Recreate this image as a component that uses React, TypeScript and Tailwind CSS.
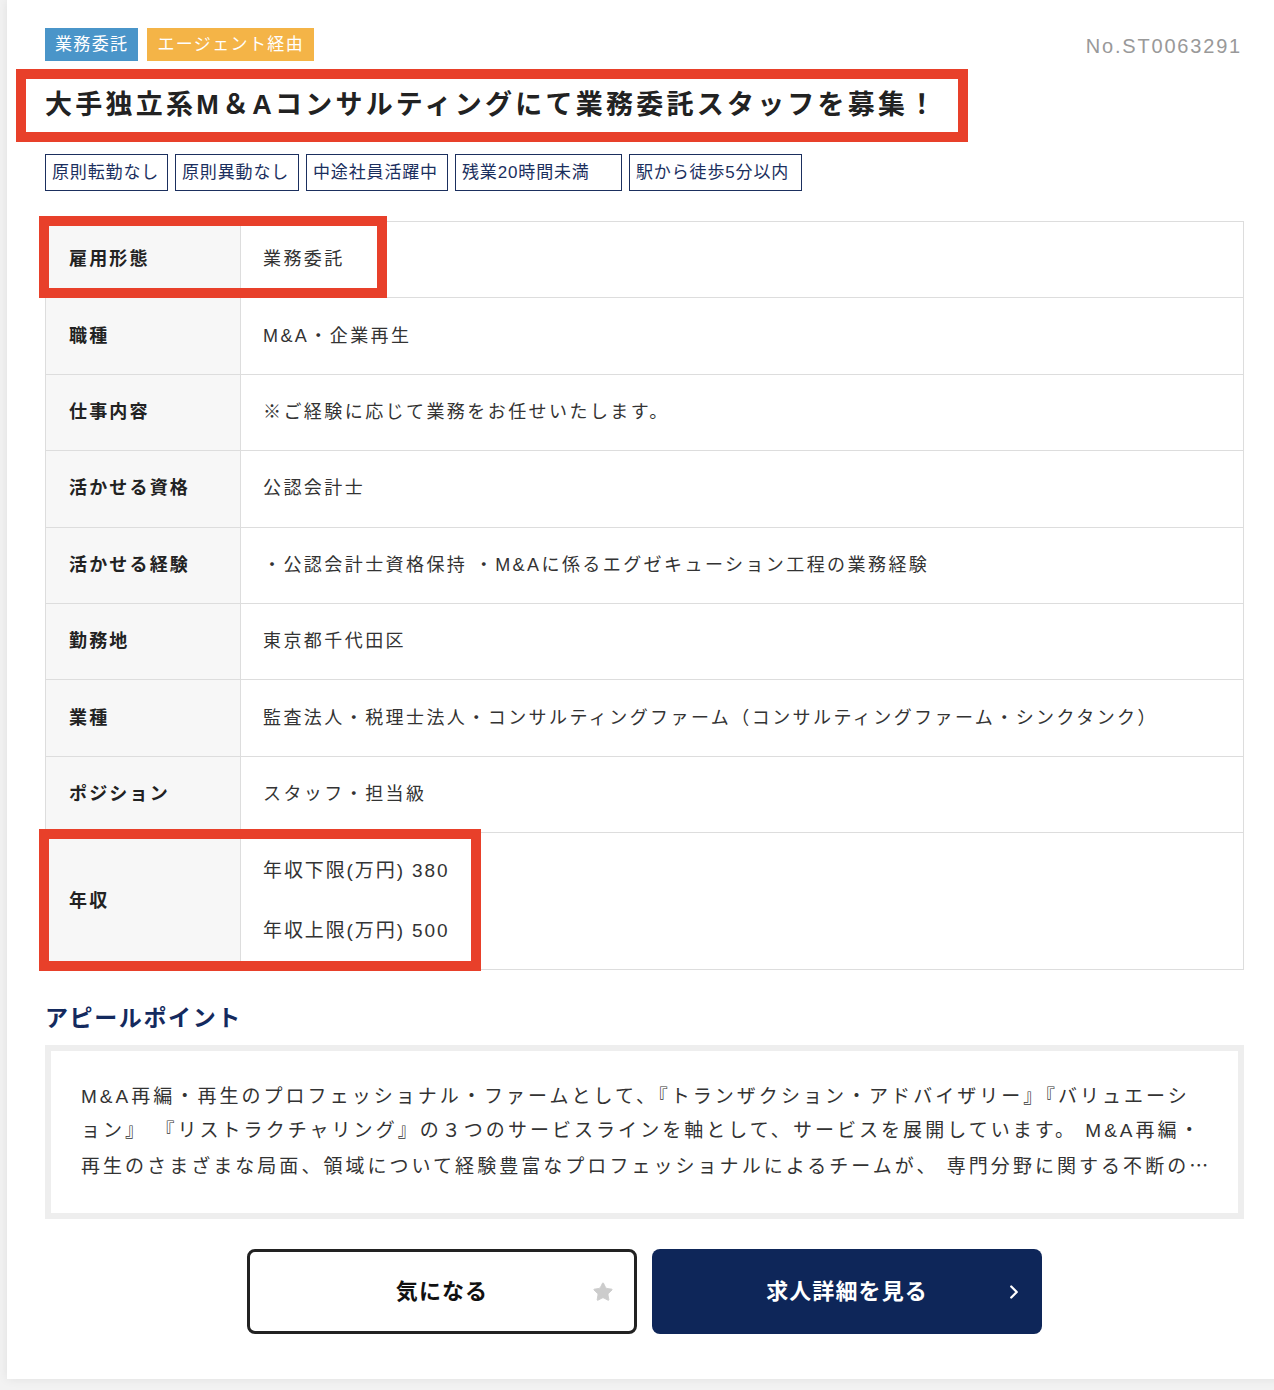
import { Star, ChevronRight } from 'lucide-react';

const FONT = { fontFamily: '"Liberation Sans", "Noto Sans CJK JP", sans-serif' };
const CJK = { fontFamily: '"Noto Sans CJK JP", sans-serif' };

const FEATURES = [
  { label: '原則転勤なし', width: 'w-[123px]' },
  { label: '原則異動なし', width: 'w-[124px]' },
  { label: '中途社員活躍中', width: 'w-[142px]' },
  { label: '残業20時間未満', width: 'w-[167px]' },
  { label: '駅から徒歩5分以内', width: 'w-[173px]' },
];

const ROWS = [
  { label: '雇用形態', value: '業務委託' },
  { label: '職種', value: 'M&A・企業再生' },
  { label: '仕事内容', value: '※ご経験に応じて業務をお任せいたします。' },
  { label: '活かせる資格', value: '公認会計士' },
  { label: '活かせる経験', value: '・公認会計士資格保持 ・M&Aに係るエグゼキューション工程の業務経験' },
  { label: '勤務地', value: '東京都千代田区' },
  { label: '業種', value: '監査法人・税理士法人・コンサルティングファーム（コンサルティングファーム・シンクタンク）' },
  { label: 'ポジション', value: 'スタッフ・担当級' },
];

const APPEAL_LINES = [
  'M&A再編・再生のプロフェッショナル・ファームとして、『トランザクション・アドバイザリー』『バリュエーシ',
  'ョン』 『リストラクチャリング』の３つのサービスラインを軸として、サービスを展開しています。 M&A再編・',
  '再生のさまざまな局面、領域について経験豊富なプロフェッショナルによるチームが、 専門分野に関する不断の',
];

export default function App() {
  return (
    <div className="w-[1274px] min-h-[1390px] overflow-hidden bg-[#f2f2f2] pl-[7px]" style={FONT}>
      <div className="w-[1275px] bg-white px-[38px] pt-[28px] pb-[45px] shadow-[0_0_10px_rgba(0,0,0,0.08)]">
        {/* badges + job number */}
        <div className="flex items-start justify-between">
          <div className="flex gap-[9px]">
            <span className="flex h-[33px] items-center bg-[#4a95c9] px-[10px] text-[17px] tracking-[0.08em] text-white">
              業務委託
            </span>
            <span className="flex h-[33px] items-center bg-[#f4b447] px-[10px] text-[17px] tracking-[0.08em] text-white">
              エージェント経由
            </span>
          </div>
          <span className="mt-[3px] mr-[2px] text-[20px] tracking-[0.09em] text-[#999]">No.ST0063291</span>
        </div>

        {/* title */}
        <div className="relative mt-[8px] flex h-[73px] items-center">
          <h1 className="text-[27px] font-bold tracking-[0.12em] text-[#222]">
            大手独立系M＆Aコンサルティングにて業務委託スタッフを募集！
          </h1>
          <div className="pointer-events-none absolute top-0 left-[-29px] h-[73px] w-[952px] border-[10px] border-[#e8402a]" />
        </div>

        {/* feature tags */}
        <div className="mt-[12px] flex gap-[7px]">
          {FEATURES.map((f) => (
            <span
              key={f.label}
              className={`flex h-[37px] items-center whitespace-nowrap border border-[#1b2f5e] px-[6px] text-[17px] tracking-[0.05em] text-[#1b2f5e] ${f.width}`}
            >
              {f.label}
            </span>
          ))}
        </div>

        {/* detail table */}
        <div className="relative mt-[30px] border-r border-b border-l border-[#dddddd]">
          {ROWS.map((r) => (
            <div key={r.label} className="flex h-[76.4px] border-t border-[#dddddd]">
              <div className="flex w-[195px] shrink-0 items-center border-r border-[#dddddd] bg-[#f7f7f7] pl-[23px] text-[18px] font-bold tracking-[0.12em] text-[#222]">
                {r.label}
              </div>
              <div className="flex items-center pl-[22px] text-[18px] tracking-[0.135em] text-[#333]">{r.value}</div>
            </div>
          ))}
          <div className="flex h-[137px] border-t border-[#dddddd]">
            <div className="flex w-[195px] shrink-0 items-center border-r border-[#dddddd] bg-[#f7f7f7] pl-[23px] text-[18px] font-bold tracking-[0.12em] text-[#222]">
              年収
            </div>
            <div className="flex flex-col justify-center gap-[34px] pl-[22px] text-[19px] leading-[26px] tracking-[0.1em] text-[#333]">
              <p>年収下限(万円) 380</p>
              <p>年収上限(万円) 500</p>
            </div>
          </div>

          <div className="pointer-events-none absolute top-[-5px] left-[-7px] h-[82px] w-[348px] border-[10px] border-[#e8402a]" />
          <div className="pointer-events-none absolute top-[608px] left-[-7px] h-[142px] w-[442px] border-[10px] border-[#e8402a]" />
        </div>

        {/* appeal point */}
        <h2 className="mt-[34px] text-[23px] leading-[28px] font-bold tracking-[0.07em] text-[#142a5e]">アピールポイント</h2>
        <div className="mt-[13px] border-[6px] border-[#eeeeee] px-[30px] py-[29px]">
          {APPEAL_LINES.map((line, i) => (
            <p key={line} className="whitespace-nowrap text-[19px] leading-[34px] tracking-[0.16em] text-[#333]">
              {line}
              {i === APPEAL_LINES.length - 1 && <span style={CJK}>…</span>}
            </p>
          ))}
        </div>

        {/* actions */}
        <div className="mt-[30px] flex justify-center gap-[15px]">
          <button className="relative flex h-[85px] w-[390px] items-center justify-center rounded-[8px] border-[3px] border-[#222] bg-white text-[22px] font-bold tracking-[0.05em] text-[#111]">
            気になる
            <Star className="absolute top-1/2 right-[20px] h-[22px] w-[22px] -translate-y-1/2 fill-[#cccccc] text-[#cccccc]" strokeWidth={1} />
          </button>
          <button className="relative flex h-[85px] w-[390px] items-center justify-center rounded-[8px] bg-[#0e2659] text-[22px] font-bold tracking-[0.05em] text-white">
            求人詳細を見る
            <ChevronRight className="absolute top-1/2 right-[17px] h-[22px] w-[22px] -translate-y-1/2 text-white" strokeWidth={2.5} />
          </button>
        </div>
      </div>
    </div>
  );
}
